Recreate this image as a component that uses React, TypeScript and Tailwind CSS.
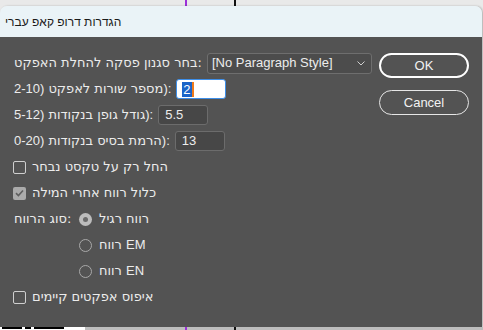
import React from "react";

const heb = { fontFamily: '"DejaVu Sans", sans-serif' };
const lat = { fontFamily: '"Liberation Sans", Arial, sans-serif' };

function Checkbox({ checked }: { checked?: boolean }) {
  return checked ? (
    <div className="w-[13px] h-[13px] rounded-[2px] bg-[#ababab] flex items-center justify-center shrink-0">
      <svg width="9" height="8" viewBox="0 0 9 8">
        <path d="M1 4.2 L3.4 6.5 L8 1.5" fill="none" stroke="#5f5f5f" strokeWidth="1.6" />
      </svg>
    </div>
  ) : (
    <div className="w-[13px] h-[13px] rounded-[2px] border border-[#cfcfcf] shrink-0" />
  );
}

function Radio({ checked }: { checked?: boolean }) {
  return checked ? (
    <div className="w-[13px] h-[13px] rounded-full bg-[#bcbcbc] flex items-center justify-center shrink-0">
      <div className="w-[5px] h-[5px] rounded-full bg-[#6a6a6a]" />
    </div>
  ) : (
    <div className="w-[13px] h-[13px] rounded-full border border-[#a8a8a8] shrink-0" />
  );
}

function RangeLabel({ range, text }: { range: string; text: string }) {
  return (
    <div className="flex items-center">
      <span style={lat}>{range})</span>
      <span className="w-[4px]" />
      <span style={heb}>{text}</span>
      <span style={lat}>):</span>
    </div>
  );
}

export default function App() {
  return (
    <div className="w-[483px] h-[330px] bg-[#e9e9e9] relative overflow-hidden" style={heb}>
      <div className="absolute left-[185px] top-0 h-full w-[2px] bg-[#9b30d9]" />
      <div className="absolute left-[234px] top-0 h-full w-[2px] bg-[#111]" />
      <div className="absolute left-0 top-[6px] w-[482px] h-[321px] rounded-t-[7px] overflow-hidden flex flex-col shadow-[1px_0_2px_rgba(0,0,0,0.25)]">
        <div className="h-[31px] bg-[#eaf3f7] flex items-center px-[5px] text-[12px] text-[#1a1a1a]" style={lat}>
          הגדרות דרופ קאפ עברי
        </div>
        <div className="flex-1 bg-[#535353] flex justify-between text-[13px] text-[#ececec]" dir="ltr">
          <div className="flex flex-col pt-[13px] pl-[14px]">
            <div className="h-[26px] flex items-center gap-[5px]">
              <span>בחר סגנון פסקה להחלת האפקט:</span>
              <div className="w-[165px] h-[21px] rounded-[3px] border border-[#6e6e6e] bg-[#4c4c4c] flex items-center justify-between pl-[4px] pr-[6px]" style={lat}>
                <span>[No Paragraph Style]</span>
                <svg width="8" height="5" viewBox="0 0 8 5"><path d="M0.5 0.5 L4 4 L7.5 0.5" fill="none" stroke="#cfcfcf" strokeWidth="1" /></svg>
              </div>
            </div>
            <div className="h-[26px] flex items-center gap-[5px]">
              <RangeLabel range="2-10" text="מספר שורות לאפקט" />
              <div className="w-[50px] h-[20px] rounded-[3px] border border-[#3d8ee8] bg-white flex items-center pl-[5px]" style={lat}>
                <span className="bg-[#1a64c8] text-white leading-[15px] px-[1px]">2</span>
                <span className="w-[2px] h-[15px] bg-[#f07a1a]" />
              </div>
            </div>
            <div className="h-[26px] flex items-center gap-[5px]">
              <RangeLabel range="5-12" text="גודל גופן בנקודות" />
              <div className="w-[50px] h-[20px] rounded-[3px] border border-[#6c6c6c] bg-[#474747] flex items-center pl-[6px]" style={lat}>5.5</div>
            </div>
            <div className="h-[26px] flex items-center gap-[5px]">
              <RangeLabel range="0-20" text="הרמת בסיס בנקודות" />
              <div className="w-[50px] h-[20px] rounded-[3px] border border-[#6c6c6c] bg-[#474747] flex items-center pl-[6px]" style={lat}>13</div>
            </div>
            <div className="h-[26px] flex items-center gap-[6px] -ml-[1px]">
              <Checkbox />
              <span>החל רק על טקסט נבחר</span>
            </div>
            <div className="h-[26px] flex items-center gap-[6px] -ml-[1px]">
              <Checkbox checked />
              <span>כלול רווח אחרי המילה</span>
            </div>
            <div className="h-[26px] flex items-center">
              <span className="w-[65px]">סוג הרווח:</span>
              <div className="flex items-center gap-[7px]">
                <Radio checked />
                <span>רווח רגיל</span>
              </div>
            </div>
            <div className="h-[26px] flex items-center gap-[7px] pl-[65px]">
              <Radio />
              <span>רווח <span style={lat}>EM</span></span>
            </div>
            <div className="h-[26px] flex items-center gap-[7px] pl-[65px]">
              <Radio />
              <span>רווח <span style={lat}>EN</span></span>
            </div>
            <div className="h-[26px] flex items-center gap-[6px] -ml-[1px]">
              <Checkbox />
              <span>איפוס אפקטים קיימים</span>
            </div>
          </div>
          <div className="flex flex-col gap-[12px] pt-[16px] pr-[13px]" style={lat}>
            <button className="w-[90px] h-[25px] rounded-full border-2 border-white text-[#f2f2f2] text-[13px] flex items-center justify-center">OK</button>
            <button className="w-[90px] h-[25px] rounded-full border border-[#e6e6e6] text-[#f2f2f2] text-[13px] flex items-center justify-center">Cancel</button>
          </div>
        </div>
      </div>
      <div className="absolute left-0 top-[327px] w-[85px] h-[3px] bg-white overflow-hidden">
        <div className="flex gap-[3px] pl-[2px]">
          <div className="w-[20px] h-[2px] bg-black" />
          <div className="w-[6px] h-[2px] bg-black" />
          <div className="w-[30px] h-[2px] bg-black" />
        </div>
      </div>
      <div className="absolute left-[85px] top-[327px] w-[398px] h-[3px] bg-[#bdbdbd]" />
      <div className="absolute left-[185px] top-[327px] h-[3px] w-[2px] bg-[#9b30d9]" />
      <div className="absolute left-[234px] top-[327px] h-[3px] w-[2px] bg-[#111]" />
    </div>
  );
}
